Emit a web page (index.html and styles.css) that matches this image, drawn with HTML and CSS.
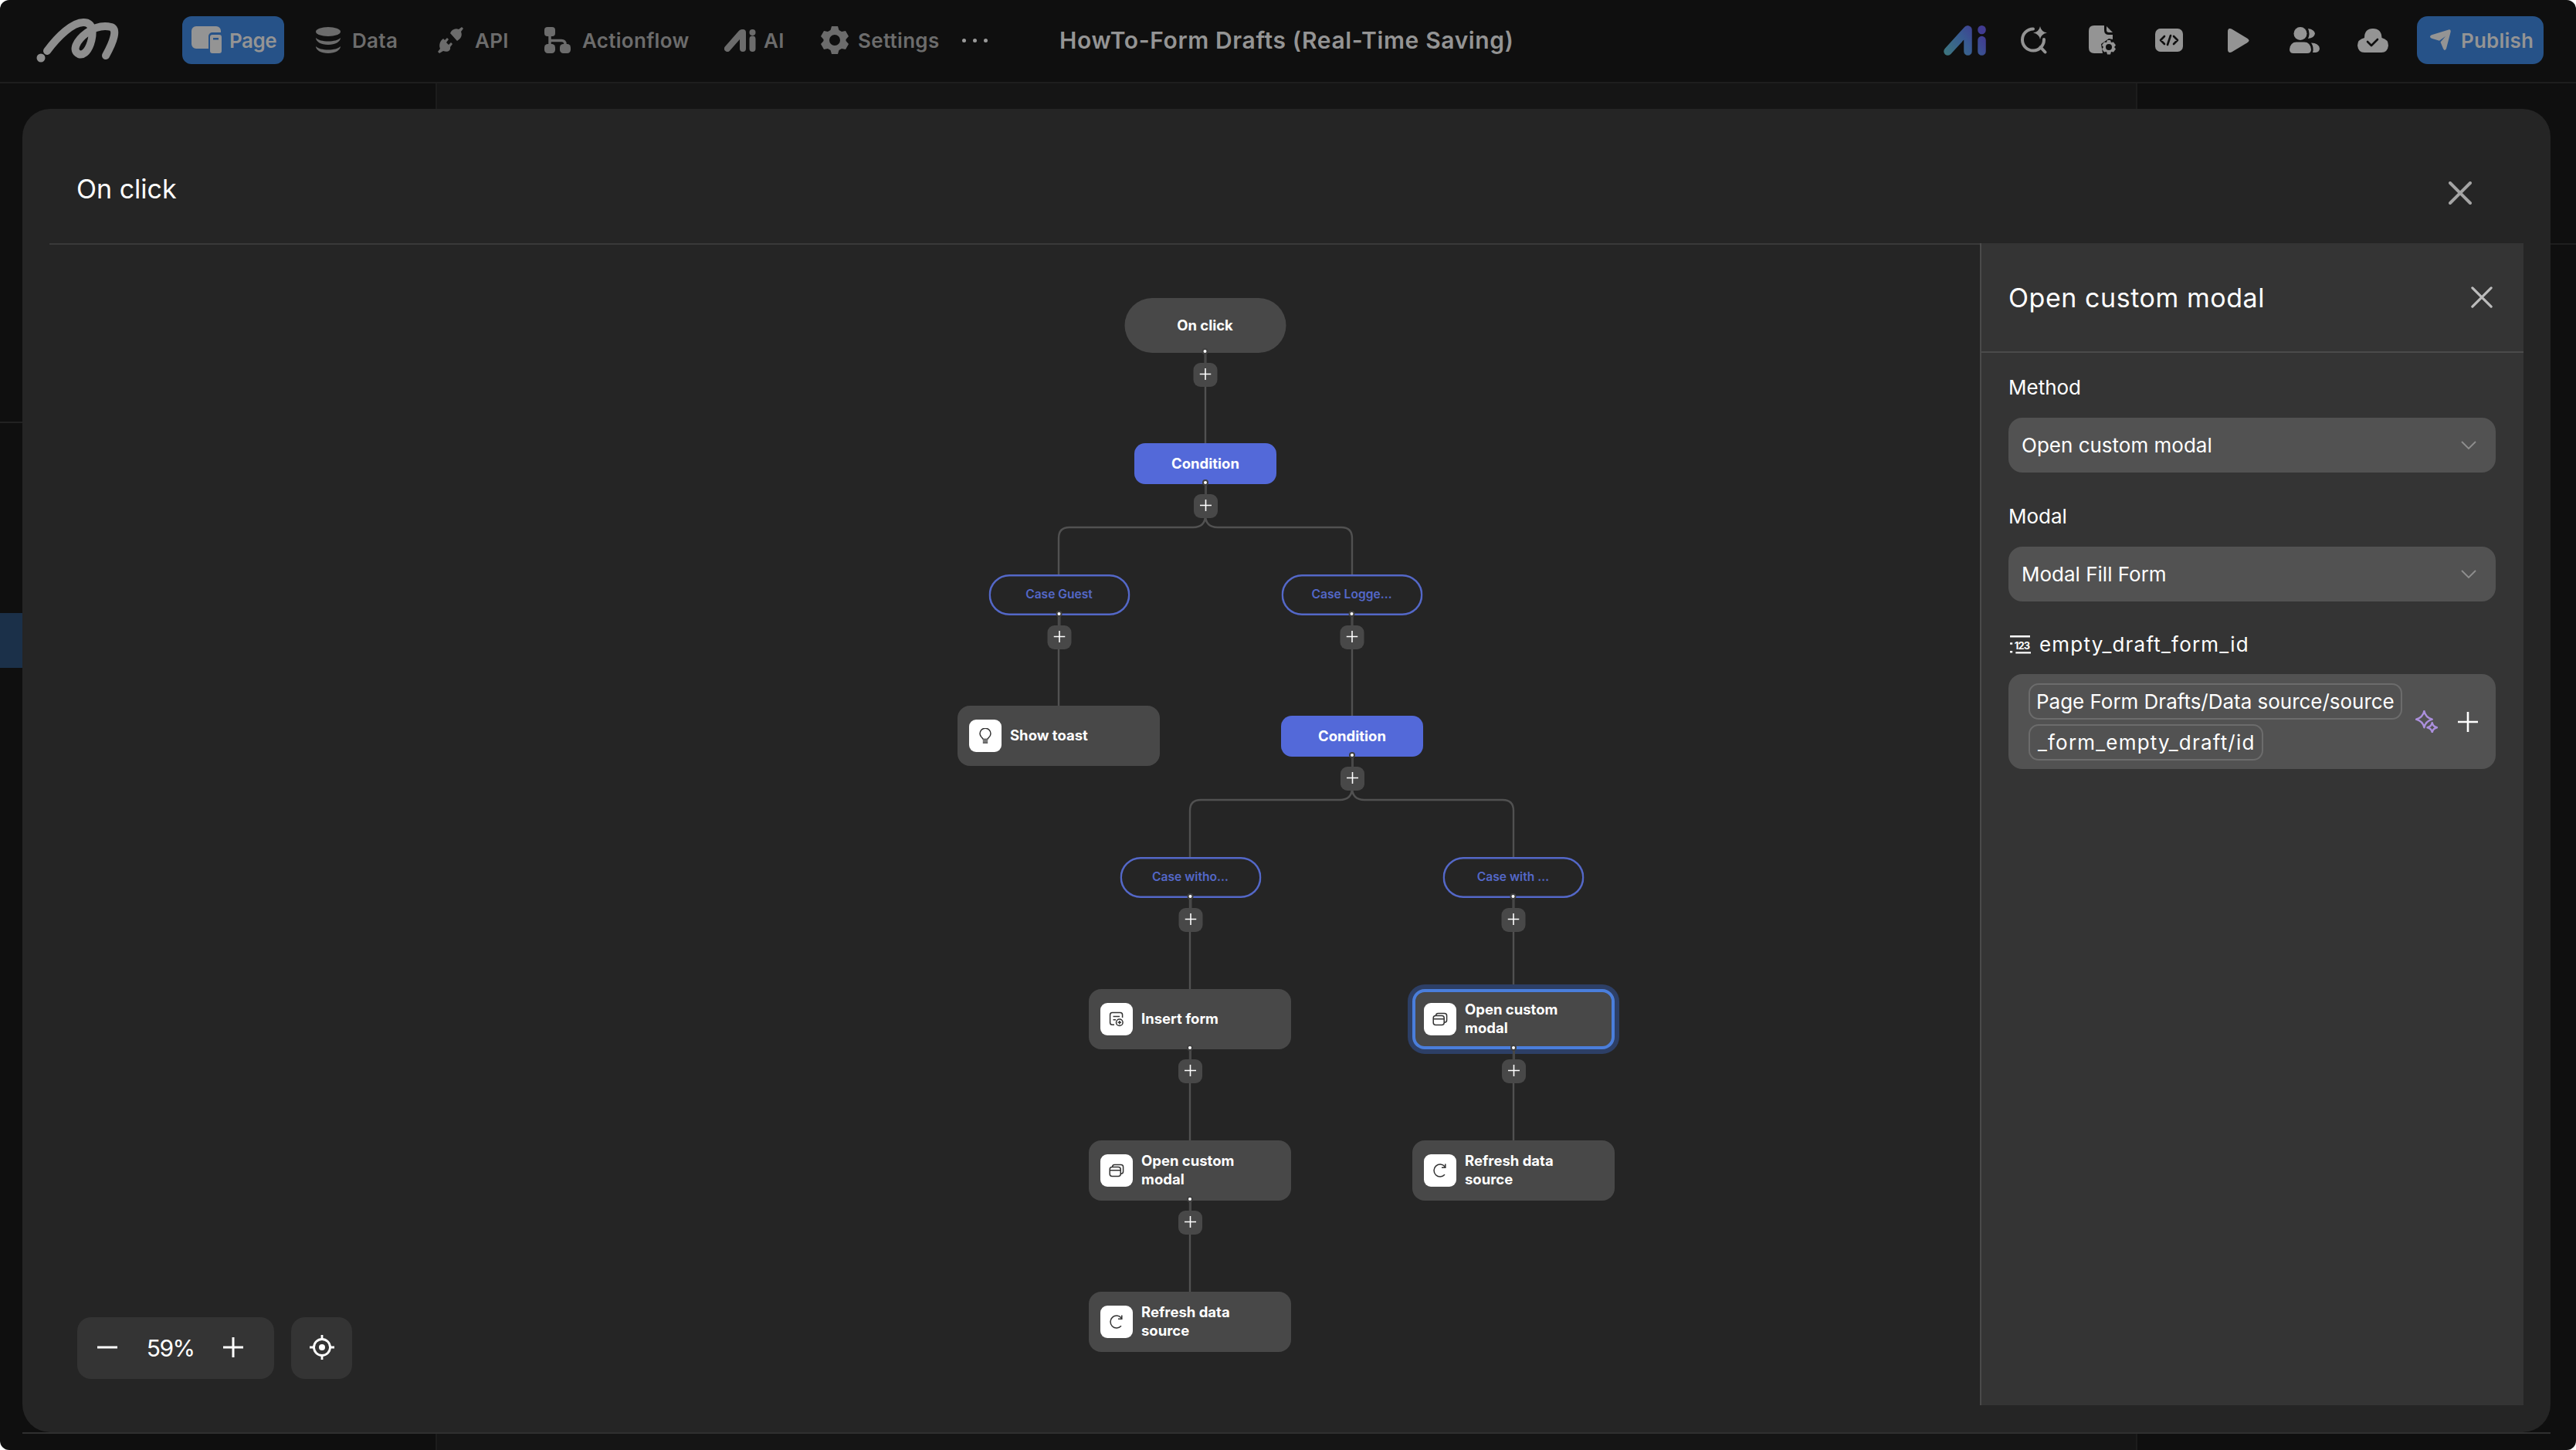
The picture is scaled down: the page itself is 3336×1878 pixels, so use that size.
FILE: index.html
```html
<!DOCTYPE html>
<html lang="en">
<head>
  <meta charset="UTF-8" />
  <meta name="viewport" content="width=device-width, initial-scale=1" />
  <title>HowTo-Form Drafts (Real-Time Saving)</title>
  <link rel="stylesheet" href="styles.css">
</head>
<body>

  <!-- shared icons for the flow nodes -->
  <svg class="sprite" aria-hidden="true">
    <symbol id="i-bulb" viewBox="0 0 20 20">
      <path d="M7.2 14.6C6.8 12.8 3 11.3 3 7.2a7 7 0 0 1 14 0c0 4.100-3.800 5.600-4.200 7.400zM6.800 16.800h6.400M6.800 19h6.400" />
    </symbol>
    <symbol id="i-insert" viewBox="0 0 20 20">
      <path d="M17.6 8V4.4A2.8 2.8 0 0 0 14.8 1.6H4.4A2.8 2.8 0 0 0 1.6 4.4v10a2.8 2.8 0 0 0 2.8 2.8H7M5.5 6.4h8.5M5.5 10.8h3.5" />
      <circle cx="13.8" cy="14.2" r="4.3" /><path d="M13.8 12v4.4M11.6 14.2h4.4" />
    </symbol>
    <symbol id="i-modal" viewBox="0 0 20 20">
      <rect x="1.2" y="5.5" width="14" height="12" rx="3" /><path d="M1.2 9.8h14M4.6 5.3c0-1.7 1-2.9 2.8-2.9h8.2a3 3 0 0 1 3 3v5.8c0 1.9-1.3 3-3.2 3" />
    </symbol>
    <symbol id="i-refresh" viewBox="0 0 20 20">
      <path d="M16 15.3a8 8 0 1 1 .2-10.400M16.8 1.4v4.8h-4.8" />
    </symbol>
  </svg>

  <div class="app">
    <header class="topbar">
      <svg class="logo" viewBox="40 18 120 68">
        <path d="M61 66C75 47 94 29 108 29c14 0 13 16 9 28-4 11-10 15-15 13-9-4-4-17 11-28 13-9 23-9 31-7 8 3 4 17-7 37" />
        <circle cx="53" cy="75" r="5.5" />
      </svg>

      <nav class="nav">
        <a class="nav-item active">
          <svg class="ic-page" viewBox="0 0 40 36"><path d="M6 0h26a6 6 0 0 1 6 6v2H27a5 5 0 0 0-5 5v16H6a6 6 0 0 1-6-6V6a6 6 0 0 1 6-6z" /><path fill-rule="evenodd" d="M27 11h9a3 3 0 0 1 3 3v18a3 3 0 0 1-3 3h-9a3 3 0 0 1-3-3V14a3 3 0 0 1 3-3zm1 4v2.500h7V15z" /></svg>
          Page
        </a>
        <a class="nav-item">
          <svg class="ic-data" viewBox="0 0 32 34"><ellipse cx="16" cy="6" rx="16" ry="6" /><path d="M0 14c3 3 9 4.500 16 4.500S29 17 32 14c0 5-7 9-16 9S0 19 0 14zM0 25c3 3 9 4.500 16 4.500S29 28 32 25c0 5-7 9-16 9S0 30 0 25z" /></svg>
          Data
        </a>
        <a class="nav-item">
          <svg class="ic-api" viewBox="0 0 34 34"><path d="M32 0l2 2-3 4c2 5 0 9-5 12l-9-10c2-5 7-7 11-5zM8 15l2 2 3-3 2 2-3 4 3 3 3-3 2 2-3 4c1 5-4 7-9 5l-5 3-2-2 3-4c-2-5 0-10 4-13z" /></svg>
          API
        </a>
        <a class="nav-item">
          <svg class="ic-flow" viewBox="0 0 34 34"><path class="stroke" d="M7 8v18M7 17.500h15q5 0 5 5V26" /><rect width="14" height="12" rx="4" /><rect y="22" width="14" height="12" rx="4.500" /><rect x="20" y="22" width="14" height="12" rx="4.500" /></svg>
          Actionflow
        </a>
        <a class="nav-item">
          <svg class="ic-ai" viewBox="0 0 41 29"><path class="stroke" d="M4 25L22 4.500M24 4v21M36.500 12.500v12.500" /><circle cx="36.500" cy="4" r="4" /></svg>
          AI
        </a>
        <a class="nav-item">
          <svg class="ic-gear" viewBox="0 0 38 38"><path fill-rule="evenodd" d="M15 1h8l1.500 5 3.500 2 5-1 4 7-3.500 4v2l3.500 4-4 7-5-1-3.500 2-1.500 5h-8l-1.500-5-3.500-2-5 1-4-7 3.500-4v-2L1 14l4-7 5 1 3.500-2zM19 12a7 7 0 1 0 0 14 7 7 0 0 0 0-14z" /></svg>
          Settings
        </a>
        <a class="more"><i></i><i></i><i></i></a>
        <h1>HowTo-Form Drafts (Real-Time Saving)</h1>
      </nav>

      <div class="actions">
        <svg width="55" height="39" viewBox="0 0 55 39">
          <defs>
            <linearGradient id="ai" gradientUnits="userSpaceOnUse" x1="0" y1="39" x2="55" y2="0"><stop offset="0" stop-color="#3d787c" /><stop offset=".5" stop-color="#385a92" /><stop offset=".85" stop-color="#413b91" /></linearGradient>
          </defs>
          <g fill="none" stroke="url(#ai)" stroke-width="10.500" stroke-linecap="round"><path d="M5.500 33.500L31 5.500M31.500 5.500V33.500M49.500 19v14.500M49.500 5.300v.8" /></g>
        </svg>
        <svg class="line" width="34" height="36" viewBox="0 0 34 36"><path d="M16 3.500A14 14 0 1 0 30 17M25.500 27l6 6.500" /><path class="fill" d="M25 0q1.200 7 9 8.500Q26.200 10 25 17q-1.200-7-9-8.500Q23.800 7 25 0z" /></svg>
        <svg width="36" height="38" viewBox="0 0 36 38"><path d="M7 0h13v6q0 6 6 6h5v6l-5-1-10 7 2 12H7q-7 0-7-7V7q0-7 7-7zM23 1l8 8h-5q-3 0-3-3z" /><path fill-rule="evenodd" d="M24 19h4l1 3 3-.5 3 4-2 2.500 2 2.500-3 4-3-.5-1 3.500h-4l-1-3.500-3 .5-3-4 2-2.500-2-2.500 3-4 3 .5zm2 5a4 4 0 1 0 0 8 4 4 0 0 0 0-8z" /></svg>
        <svg width="36" height="30" viewBox="0 0 36 30"><rect width="36" height="30" rx="7" /><path class="cut" d="M12 10l-5 5 5 5M24 10l5 5-5 5M20 9l-4 12" /></svg>
        <svg width="28" height="31" viewBox="0 0 28 31"><path d="M0 4q0-5.500 5-3.500l20 12q5 3 0 6l-20 12q-5 2-5-3.500z" /></svg>
        <svg width="40" height="34" viewBox="0 0 40 34"><circle cx="14" cy="8.500" r="8.500" /><path d="M0 29q1-9.500 9-9.500h10q8 0 9 9.500 0 5-5 5H5q-5 0-5-5zM24 2q8 1 9 6.500-1 5.500-9 6.500 3-6 0-13zM28 20.500q10 0 11 7.500-.5 4.500-5 5h-4q2-7-2-12.500z" /></svg>
        <svg width="40" height="31" viewBox="0 0 40 31"><path d="M9 12Q9 0 20 0t11.500 12Q40 14 40 22q-1 9-9 9H9q-8 0-9-9 0-8 9-10z" /><path class="cut" d="M13 17l5 5 8-8" /></svg>
        <button class="publish">
          <svg width="27" height="28" viewBox="0 0 27 28"><path d="M24 .4Q27.500-.5 26.500 4L21 25q-2 4-4 0l-3.500-8.500L20 9l-8 5.800-10-3q-4-2.300 0-4.500z" /></svg>
          Publish
        </button>
      </div>
    </header>

    <div class="workspace">
      <aside class="left"><div class="tree-head"></div><div class="tree-selected"></div></aside>
      <main></main>
      <aside class="right"><div class="props-head"></div></aside>
    </div>

    <section class="modal">
      <div class="modal-head">
        <h2>On click</h2>
        <svg class="close" viewBox="0 0 30 30"><path d="M2 2l26 26M28 2L2 28" /></svg>
      </div>

      <div class="modal-body">
        <div class="canvas" id="canvas">
          <svg class="edges" viewBox="0 0 2534 1503">
            <path d="M1531 140V257" />
            <path d="M1531 350q0 16-16 16H1355q-14 0-14 14v217" />
            <path d="M1531 350q0 16 16 16h160q14 0 14 14v230" />
            <path d="M1721 703q0 16-16 16h-180q-14 0-14 14v623" />
            <path d="M1721 703q0 16 16 16h179q14 0 14 14v427" />
          </svg>

          <div class="tools">
            <div class="zoom">
              <svg viewBox="0 0 26 26"><path d="M0 13h26" /></svg>
              <span>59%</span>
              <svg viewBox="0 0 26 26"><path d="M0 13h26M13 0v26" /></svg>
            </div>
            <div class="locate">
              <svg viewBox="0 0 32 32"><circle cx="16" cy="16" r="10.500" /><circle class="core" cx="16" cy="16" r="4" /><path d="M16 0v6M16 26v6M0 16h6M26 16h6" /></svg>
            </div>
          </div>
        </div>

        <aside class="panel">
          <div class="panel-head">
            <h3>Open custom modal</h3>
            <svg class="close" viewBox="0 0 30 30"><path d="M2 2l26 26M28 2L2 28" /></svg>
          </div>
          <div class="panel-body">
            <div class="field">
              <label>Method</label>
              <div class="select">Open custom modal<svg viewBox="0 0 20 12"><path d="M1 1l9 9 9-9" /></svg></div>
            </div>
            <div class="field">
              <label>Modal</label>
              <div class="select">Modal Fill Form<svg viewBox="0 0 20 12"><path d="M1 1l9 9 9-9" /></svg></div>
            </div>
            <div class="field">
              <label class="wide">
                <svg class="ic-number" viewBox="0 0 28 24"><path d="M2 2h25M2 11h3M2 21.500h3M9 22.500h19" /><text x="7.500" y="18.500">123</text></svg>
                empty_draft_form_id
              </label>
              <div class="binding">
                <div class="chips">
                  <span class="chip">Page Form Drafts/Data source/source</span>
                  <span class="chip wide">_form_empty_draft/id</span>
                </div>
                <svg class="spark" viewBox="0 0 28 28"><path d="M11 1q1.700 8 10 10.300-8.300 2.300-10 10.200-1.700-7.900-10-10.200Q9.300 9 11 1zM21 15.500q1 5 6 6-5 1-6 6-1-5-6-6 5-1 6-6z" /></svg>
                <svg class="plus" viewBox="0 0 26 26"><path d="M0 13h26M13 0v26" /></svg>
              </div>
            </div>
          </div>
        </aside>
      </div>
    </section>
  </div>

  <script>
    // x is the node's centre line, y its top edge
    const nodes = [
      { type: 'start', x: 1530.5, y: 69, text: 'On click', add: true },
      { type: 'condition', x: 1531, y: 257, text: 'Condition', add: true },
      { type: 'case', x: 1341.5, y: 427, text: 'Case Guest', add: true },
      { type: 'case', x: 1720.5, y: 427, text: 'Case Logge…', add: true },
      { type: 'action', x: 1341, y: 597, text: 'Show toast', icon: 'bulb' },
      { type: 'condition', x: 1721, y: 610, text: 'Condition', add: true },
      { type: 'case', x: 1511.5, y: 793, text: 'Case witho…', add: true },
      { type: 'case', x: 1929.5, y: 793, text: 'Case with …', add: true },
      { type: 'action', x: 1511, y: 964, text: 'Insert form', icon: 'insert', add: true },
      { type: 'action', x: 1930, y: 964, text: 'Open custom modal', icon: 'modal', add: true, selected: true },
      { type: 'action', x: 1511, y: 1160, text: 'Open custom modal', icon: 'modal', add: true },
      { type: 'action', x: 1930, y: 1160, text: 'Refresh data source', icon: 'refresh' },
      { type: 'action', x: 1511, y: 1356, text: 'Refresh data source', icon: 'refresh' }
    ];

    const canvas = document.getElementById('canvas');

    nodes.forEach(node => {
      const el = document.createElement('div');
      el.className = 'node ' + node.type + (node.selected ? ' selected' : '');
      el.style.left = node.x + 'px';
      el.style.top = node.y + 'px';

      let html = '';
      if (node.icon) {
        html += `<i class="node-icon"><svg><use href="#i-${node.icon}" /></svg></i>`;
      }
      html += `<span>${node.text}</span>`;
      if (node.add) {
        html += '<b class="stem"></b><b class="port"></b>';
        html += '<button class="add"><svg viewBox="0 0 16 16"><path d="M0 8h16M8 0v16" /></svg></button>';
      }
      el.innerHTML = html;
      canvas.appendChild(el);
    });
  </script>

</body>
</html>
```
FILE: styles.css
```css
* {
  box-sizing: border-box;
}

body {
  margin: 0;
  background: #fff;
  font-family: Inter, "Liberation Sans", sans-serif;
  color: #fff;
}

h1, h2, h3 {
  margin: 0;
  font-weight: 400;
}

button {
  border: none;
  padding: 0;
  font-family: inherit;
}

svg {
  display: block;
  flex: none;
}

.sprite {
  position: absolute;
  width: 0;
  height: 0;
}

.app {
  position: relative;
  display: flex;
  flex-direction: column;
  width: 3336px;
  height: 1878px;
  background: #0f0f0f;
  border-radius: 12px;
  overflow: hidden;
}

/* Top bar */
.topbar {
  display: flex;
  align-items: center;
  height: 108px;
  padding: 0 42px 2px 40px;
  border-bottom: 2px solid #1e1e1e;
}

.logo {
  width: 120px;
  height: 68px;
  fill: #8e8e8e;
}

.logo path {
  fill: none;
  stroke: #8e8e8e;
  stroke-width: 10;
  stroke-linecap: round;
  stroke-linejoin: round;
}

.nav {
  display: grid;
  grid-template-columns: 169px 157px 139px 233px 124px 184px 130px auto;
  align-items: center;
  margin-left: 76px;
}

.nav-item {
  display: flex;
  align-items: center;
  gap: 15px;
  height: 62px;
  padding-left: 4px;
  color: #6c6c6c;
  font-size: 26px;
  font-weight: 600;
  letter-spacing: 0.3px;
}

.nav-item.active {
  gap: 9px;
  width: 132px;
  padding-left: 12px;
  border-radius: 12px;
  background: #265288;
  color: #949494;
  letter-spacing: -0.5px;
}

.nav-item svg {
  fill: currentColor;
}

.nav-item .stroke {
  fill: none;
  stroke: currentColor;
  stroke-width: 3.5;
}

.ic-page { width: 40px; height: 36px; }
.ic-data { width: 32px; height: 34px; }
.ic-api { width: 34px; height: 34px; }
.ic-flow { width: 34px; height: 34px; }
.ic-ai { width: 41px; height: 29px; }
.ic-gear { width: 38px; height: 38px; }

.nav-item .ic-ai .stroke {
  stroke-width: 8;
  stroke-linecap: round;
}

.nav-item:has(.ic-ai) {
  gap: 10px;
}

.nav-item:has(.ic-gear) {
  gap: 11px;
}

.more {
  display: flex;
  gap: 9px;
  padding-left: 4px;
}

.more i {
  width: 5px;
  height: 5px;
  border-radius: 50%;
  background: #9a9a9a;
}

h1 {
  color: #949494;
  font-size: 30px;
  font-weight: 600;
  letter-spacing: 0.62px;
  line-height: 36px;
  margin-top: -1px;
  white-space: nowrap;
}

.actions {
  display: grid;
  grid-template-columns: 100px 88px 86px 94px 80px 88px 77px 164px;
  align-items: center;
  margin-left: auto;
  fill: #949494;
}

.actions .line path {
  fill: none;
  stroke: #949494;
  stroke-width: 4;
  stroke-linecap: round;
}

.actions .line .fill {
  fill: #949494;
  stroke: none;
}

.actions .cut {
  fill: none;
  stroke: #0f0f0f;
  stroke-width: 2.6;
  stroke-linecap: round;
  stroke-linejoin: round;
}

.publish {
  display: flex;
  align-items: center;
  gap: 13px;
  height: 62px;
  padding-left: 17px;
  border-radius: 14px;
  background: #265288;
  color: #949494;
  font-size: 26px;
  font-weight: 600;
  letter-spacing: 0.2px;
}

.publish svg {
  fill: #949494;
}

/* Editor behind the modal */
.workspace {
  display: flex;
  flex: 1;
}

.left {
  width: 566px;
  border-right: 2px solid #1c1c1c;
}

.tree-head {
  height: 440px;
  border-bottom: 2px solid #222;
}

.tree-selected {
  height: 71px;
  margin-top: 246px;
  background: #1b3049;
}

.workspace main {
  flex: 1;
  background: #151515;
}

.right {
  width: 570px;
  border-left: 2px solid #1c1c1c;
}

.props-head {
  height: 209px;
  border-bottom: 2px solid #1e1e1e;
}

/* Modal */
.modal {
  position: absolute;
  top: 141px;
  left: 29px;
  display: flex;
  flex-direction: column;
  width: 3274px;
  height: 1714px;
  padding: 0 35px 35px 1px;
  border-radius: 36px;
  background: #252525;
}

.modal::after {
  content: "";
  position: absolute;
  top: 100%;
  left: 0;
  right: 0;
  height: 2px;
  background: #303030;
}

.modal-head {
  display: flex;
  align-items: center;
  justify-content: space-between;
  height: 176px;
  margin-left: 34px;
  padding: 33px 67px 0 35px;
  border-bottom: 2px solid #393939;
}

h2 {
  font-size: 34px;
}

.close {
  width: 30px;
  height: 30px;
  fill: none;
  stroke: #a4a4a4;
  stroke-width: 4;
  stroke-linecap: round;
}

.modal-head .close {
  margin-top: 11px;
}

.modal-body {
  display: flex;
  flex: 1;
}

/* Flow canvas */
.canvas {
  position: relative;
  width: 2534px;
}

.edges {
  position: absolute;
  inset: 0;
  width: 2534px;
  height: 1503px;
  fill: none;
  stroke: #515151;
  stroke-width: 2.4;
}

.node {
  position: absolute;
  display: flex;
  align-items: center;
  justify-content: center;
  transform: translateX(-50%);
  font-size: 18.5px;
  font-weight: 650;
  line-height: 24px;
}

.node span {
  padding-bottom: 2px;
}

.start {
  width: 209px;
  height: 71px;
  border-radius: 36px;
  background: #484848;
}

.condition {
  width: 184px;
  height: 53px;
  border-radius: 14px;
  background: #5369d9;
}

.case {
  width: 183px;
  height: 53px;
  border-radius: 27px;
  background: #252525;
  box-shadow: inset 0 0 0 2.5px #5468c8;
  color: #5468c8;
  font-size: 15.6px;
  font-weight: 600;
}

.action {
  justify-content: flex-start;
  gap: 11px;
  width: 262px;
  height: 78px;
  padding: 0 54px 0 15px;
  border-radius: 16px;
  background: #484848;
}

.selected {
  box-shadow: inset 0 0 0 4px #4a7edc, 0 0 0 6px #2d3f66;
}

.node-icon {
  display: flex;
  align-items: center;
  justify-content: center;
  flex: none;
  width: 42px;
  height: 42px;
  border-radius: 9px;
  background: #fff;
}

.node-icon svg {
  width: 20px;
  height: 20px;
  fill: none;
  stroke: #333;
  stroke-width: 1.5;
}

.stem {
  position: absolute;
  top: 100%;
  left: calc(50% - 1.5px);
  width: 3px;
  height: 14px;
  background: #484848;
}

.port {
  position: absolute;
  bottom: -2px;
  left: calc(50% - 4px);
  width: 8px;
  height: 8px;
  border: 2px solid #3f3f3f;
  border-radius: 50%;
  background: #fff;
}

.add {
  position: absolute;
  top: calc(100% + 13px);
  left: calc(50% - 15.5px);
  width: 31px;
  height: 31px;
  border-radius: 9px;
  background: #484848;
}

.add svg {
  width: 15px;
  height: 15px;
  margin: -3px auto 0;
  stroke: #fff;
  stroke-width: 1.7;
}

/* Zoom tools */
.tools {
  position: absolute;
  bottom: 34px;
  left: 70px;
  display: flex;
  gap: 22px;
}

.zoom,
.locate {
  display: flex;
  align-items: center;
  height: 80px;
  border-radius: 18px;
  background: #343434;
}

.zoom {
  justify-content: space-between;
  width: 255px;
  padding: 0 40px 0 26px;
  font-size: 30px;
  letter-spacing: -1.6px;
}

.zoom svg {
  width: 26px;
  height: 28px;
  margin-bottom: 2px;
  stroke: #fff;
  stroke-width: 3;
}

.locate {
  justify-content: center;
  width: 79px;
}

.locate svg {
  width: 32px;
  height: 34px;
  margin-bottom: 2px;
  fill: none;
  stroke: #fff;
  stroke-width: 2.8;
}

.locate .core {
  fill: #fff;
  stroke: none;
}

/* Side panel */
.panel {
  width: 704px;
  margin-top: -2px;
  border-left: 2px solid #4a4a4a;
  background: #343434;
}

.panel-head {
  display: flex;
  align-items: center;
  justify-content: space-between;
  height: 142px;
  padding: 0 40px 0 35px;
  border-bottom: 2px solid #4a4a4a;
}

h3 {
  font-size: 34px;
  letter-spacing: 0.55px;
}

.panel-head .close {
  width: 28px;
  height: 28px;
  stroke: #bcbcbc;
  stroke-width: 3.4;
}

.panel-body {
  padding: 24px 36px 0 35px;
  font-size: 26px;
}

.field {
  margin-bottom: 36px;
}

.field label {
  display: flex;
  align-items: center;
  height: 40px;
  margin-bottom: 20px;
}

.field .wide {
  letter-spacing: 1.2px;
}

.field label.wide {
  gap: 11px;
  margin: -1px 0 19px;
}

.select {
  display: flex;
  align-items: center;
  justify-content: space-between;
  height: 71px;
  padding: 0 25px 0 17px;
  border-radius: 18px;
  background: #525252;
}

.select svg {
  width: 20px;
  height: 12px;
  fill: none;
  stroke: #8f8f8f;
  stroke-width: 1.8;
}

.ic-number {
  width: 29px;
  height: 25px;
  stroke: #fff;
  stroke-width: 2.4;
}

.ic-number text {
  fill: #fff;
  stroke: none;
  font-size: 12.5px;
  font-weight: 700;
  letter-spacing: -0.9px;
}

.binding {
  display: flex;
  align-items: center;
  height: 123px;
  padding: 0 23px 0 26px;
  border-radius: 18px;
  background: #525252;
}

.chips {
  display: flex;
  flex-direction: column;
  align-items: flex-start;
  gap: 6px;
  margin-right: auto;
}

.chip {
  display: flex;
  align-items: center;
  height: 47px;
  padding: 0 8px;
  border: 2px solid #6c6c6c;
  border-radius: 13px;
  letter-spacing: -0.02px;
}

.chip.wide {
  padding-left: 10px;
}

.spark {
  width: 29px;
  height: 29px;
  margin-right: 26px;
  fill: none;
  stroke: #ab8fdc;
  stroke-width: 2.3;
  stroke-linejoin: round;
}

.plus {
  width: 26px;
  height: 26px;
  stroke: #fff;
  stroke-width: 2.6;
}
```
